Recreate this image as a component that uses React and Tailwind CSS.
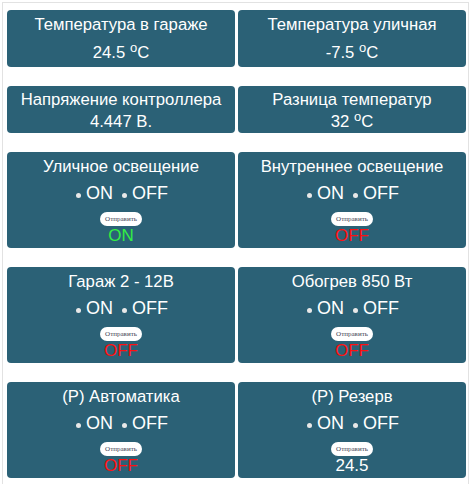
import React from 'react';

const sensors = [
  [
    { title: 'Температура в гараже', value: '24.5', unit: true },
    { title: 'Температура уличная', value: '-7.5', unit: true },
  ],
  [
    { title: 'Напряжение контроллера', value: '4.447 В.' },
    { title: 'Разница температур', value: '32', unit: true },
  ],
];

const switches = [
  [
    { title: 'Уличное освещение', status: 'ON' },
    { title: 'Внутреннее освещение', status: 'OFF' },
  ],
  [
    { title: 'Гараж 2 - 12В', status: 'OFF' },
    { title: 'Обогрев 850 Вт', status: 'OFF' },
  ],
  [
    { title: '(Р) Автоматика', status: 'OFF' },
    { title: '(Р) Резерв', status: '24.5' },
  ],
];

const statusClass = (s) => {
  if (s === 'ON') return 'text-[#33ee44]';
  if (s === 'OFF') return 'text-[#ff1010]';
  return 'text-white';
};

const Card = ({ children, className = '' }) => (
  <div className={`flex-1 rounded-[4px] bg-[#2b6176] text-white text-center ${className}`}>
    {children}
  </div>
);

const App = () => {
  return (
    <div className="min-h-[484px] bg-white font-['Liberation_Sans',Arial,sans-serif]">
      <div className="ml-[2px] mt-[2px] w-[467px] border border-[#e2e2e2] pl-[4px] pr-[2px] pt-[7px] pb-[6px] flex flex-col gap-[19px]">
        {sensors.map((row, i) => (
          <div key={i} className="flex gap-[3px]">
            {row.map((s) => (
              <Card key={s.title} className={i === 0 ? 'h-[57px] pt-[4px]' : 'h-[47px] pt-[3px]'}>
                <div className="text-[16.7px] leading-[22px]">{s.title}</div>
                <div className={`text-[16.7px] leading-[22px] ${i === 0 ? 'mt-[6px]' : 'mt-[0px]'}`}>
                  {s.value}
                  {s.unit && (
                    <>
                      {' '}
                      <span className="text-[13px] relative top-[-6px]">o</span>C
                    </>
                  )}
                </div>
              </Card>
            ))}
          </div>
        ))}
        {switches.map((row, i) => (
          <div key={i} className="flex gap-[3px]">
            {row.map((s) => (
              <Card key={s.title} className="h-[96px] pt-[4px]">
                <div className="text-[16.7px] leading-[22px]">{s.title}</div>
                <div className="mt-[4px] flex items-center justify-center text-[18px] leading-[22px]">
                  <span className="inline-block w-[5px] h-[5px] rounded-full bg-[#e8e8e8] ml-[2px] mr-[5px] mt-[4px]"></span>
                  <span>ON</span>
                  <span className="inline-block w-[5px] h-[5px] rounded-full bg-[#e8e8e8] ml-[9px] mr-[5px] mt-[4px]"></span>
                  <span>OFF</span>
                </div>
                <div className="mt-[8px] flex justify-center">
                  <button className="h-[14px] px-[5px] rounded-full bg-white text-[#445] text-[7px] leading-[14px] font-['Liberation_Serif',serif]">
                    Отправить
                  </button>
                </div>
                <div className={`text-[17px] leading-[20px] ${statusClass(s.status)}`}>{s.status}</div>
              </Card>
            ))}
          </div>
        ))}
      </div>
    </div>
  );
};

export default App;
